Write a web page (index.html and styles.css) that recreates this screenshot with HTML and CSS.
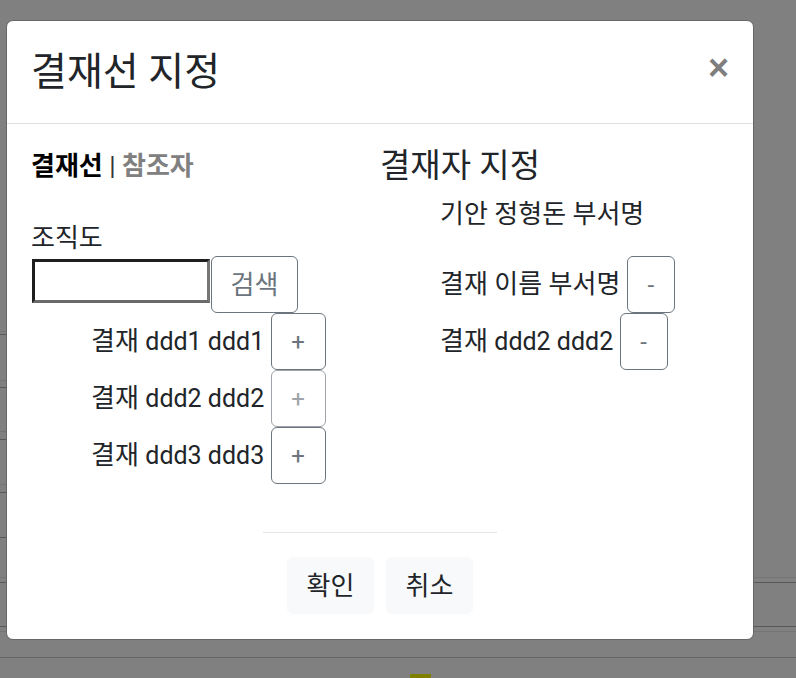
FILE: index.html
```html
<!DOCTYPE html>
<html lang="ko">
<head>
<meta charset="utf-8">
<title>결재선 지정</title>
<link rel="stylesheet" href="styles.css">
</head>
<body>
<div class="page-under">
  <div class="ln ln-a1"></div>
  <div class="ln ln-a2"></div>
  <div class="ln ln-b1"></div>
  <div class="ln ln-b2"></div>
  <div class="ln ln-c1"></div>
  <div class="ln ln-c2"></div>
  <div class="ln ln-d1"></div>
  <div class="ln ln-d2"></div>
  <div class="ln ln-e1"></div>
  <div class="ln ln-full ln-f1"></div>
  <div class="ln ln-full ln-f2"></div>
  <div class="ln ln-full ln-g1"></div>
  <div class="ln ln-full ln-g2"></div>
  <div class="ln ln-full ln-h1"></div>
  <div class="olive"></div>
</div>
<div class="overlay">
  <div class="modal">
    <div class="modal-header">
      <h4 class="modal-title">결재선 지정</h4>
      <button class="close" type="button">×</button>
    </div>
    <div class="modal-body">
      <div class="cols">
        <div class="col">
          <div class="tabs"><b class="tab-on">결재선</b> <span class="sep">|</span> <b class="tab-off">참조자</b></div>
          <div class="label">조직도</div>
          <div class="search">
            <input class="search-input" type="text">
            <button class="btn btn-outline btn-search" type="button">검색</button>
          </div>
          <ul class="list">
            <li>결재 <span class="en">ddd1 ddd1</span> <button class="btn btn-outline btn-plus" type="button">+</button></li>
            <li>결재 <span class="en">ddd2 ddd2</span> <button class="btn btn-outline btn-plus" type="button" disabled>+</button></li>
            <li>결재 <span class="en">ddd3 ddd3</span> <button class="btn btn-outline btn-plus" type="button">+</button></li>
          </ul>
        </div>
        <div class="col">
          <h5 class="col-title">결재자 지정</h5>
          <ul class="list">
            <li>기안 정형돈 부서명</li>
          </ul>
          <ul class="list">
            <li>결재 이름 부서명 <button class="btn btn-outline btn-minus" type="button">-</button></li>
            <li>결재 <span class="en">ddd2 ddd2</span> <button class="btn btn-outline btn-minus" type="button">-</button></li>
          </ul>
        </div>
      </div>
      <hr class="divider">
      <div class="actions">
        <button class="btn btn-light" type="button">확인</button>
        <button class="btn btn-light" type="button">취소</button>
      </div>
    </div>
  </div>
</div>
</body>
</html>
```
FILE: styles.css
```css
html, body {
  margin: 0;
  padding: 0;
}
body {
  width: 796px;
  height: 678px;
  overflow: hidden;
  position: relative;
  background: #808080;
  font-family: Roboto, "Noto Sans CJK KR", sans-serif;
  font-size: 26px;
  line-height: 36px;
  color: #212529;
}

/* page content seen through the backdrop */
.page-under {
  position: absolute;
  inset: 0;
}
.ln {
  position: absolute;
  left: 0;
  width: 8px;
  height: 1px;
  background: #585858;
}
.ln-full { width: 796px; }
.ln-a1 { top: 331px; background: #747474; }
.ln-a2 { top: 334px; }
.ln-b1 { top: 380px; background: #747474; }
.ln-b2 { top: 387px; }
.ln-c1 { top: 431px; background: #747474; }
.ln-c2 { top: 439px; }
.ln-d1 { top: 484px; background: #747474; }
.ln-d2 { top: 492px; }
.ln-e1 { top: 537px; }
.ln-f1 { top: 577px; background: #747474; }
.ln-f2 { top: 582px; }
.ln-g1 { top: 626px; }
.ln-g2 { top: 631px; background: #747474; }
.ln-h1 { top: 657px; background: #666; }
.olive {
  position: absolute;
  left: 410px;
  top: 674px;
  width: 21px;
  height: 4px;
  background: #808000;
}

.overlay {
  position: absolute;
  inset: 0;
  padding: 20px 0 0 6px;
}

.modal {
  width: 748px;
  box-sizing: border-box;
  background: #fff;
  border: 1px solid #666;
  border-radius: 7px;
}

.modal-header {
  display: flex;
  align-items: flex-start;
  padding: 24px;
  border-bottom: 1px solid #dee2e6;
}
.modal-title {
  margin: 6px 0 6px 0;
  font-size: 39px;
  line-height: 42px;
  font-weight: 400;
  color: #212529;
}
.close {
  margin: -24px -24px -24px auto;
  padding: 29px 24px 19px;
  background: transparent;
  border: 0;
  font-family: "Liberation Sans", Arial, sans-serif;
  font-size: 36px;
  font-weight: 700;
  line-height: 1;
  color: #000;
  opacity: .5;
}

.modal-body {
  padding: 24px 24px 25px;
}

.cols {
  display: flex;
}
.col {
  flex: 1 1 0;
  min-width: 0;
}

.tabs {
  margin-bottom: 36px;
}
.tab-on { color: #000; font-weight: 700; }
.sep { color: #333; }
.tab-off { color: #808080; font-weight: 700; }

.en {
  font-size: 25px;
}

.search {
  display: flex;
  align-items: flex-start;
}
.search-input {
  width: 178px;
  height: 44px;
  margin: 3px 0 0 1px;
  box-sizing: border-box;
  border: 3px solid;
  border-color: #1e1e1e #767676 #6a6a6a #1e1e1e;
  padding: 1px 3px;
  font: inherit;
  background: #fff;
}

.btn {
  display: inline-block;
  box-sizing: border-box;
  font-family: inherit;
  font-size: 26px;
  line-height: 36px;
  padding: 9.5px 18px;
  border: 1px solid transparent;
  border-radius: 6px;
  background: transparent;
  text-align: center;
  vertical-align: baseline;
}
.btn-outline {
  color: #6c757d;
  border-color: #6c757d;
}
.btn-outline:disabled {
  opacity: .65;
}
.btn-search {
  margin-left: 1px;
  width: 87px;
}
.btn-plus {
  width: 55px;
  padding-left: 0;
  padding-right: 0;
  font-size: 24px;
}
.btn-minus {
  width: 48px;
  padding-left: 0;
  padding-right: 0;
  font-size: 24px;
}
.btn-light {
  background: #f8f9fa;
  border-color: #f8f9fa;
  color: #212529;
  width: 87px;
}

.list {
  list-style: none;
  margin: 0 0 24px 0;
  padding-left: 60px;
}

.col-title {
  margin: 0 0 12px 0;
  font-size: 33px;
  line-height: 36px;
  font-weight: 400;
}

.divider {
  width: 234px;
  margin: 24px auto;
  border: 0;
  border-top: 1px solid #e3e5e8;
}

.actions {
  display: flex;
  justify-content: center;
  gap: 12px;
}
```
